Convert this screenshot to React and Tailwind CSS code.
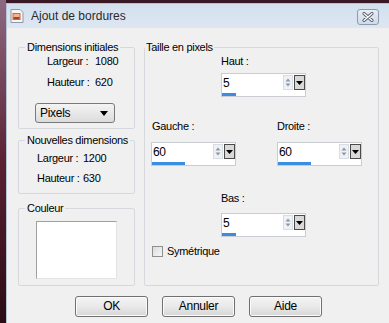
import React from "react";

function Spin({ value, bar }) {
  return (
    <div className="relative w-[85px] h-[24px] border border-[#c9cdd2] bg-white flex">
      <div className="flex-1 flex flex-col">
        <div className="h-[18px] pl-[1px] flex items-center text-[12px] leading-none text-black">{value}</div>
        <div className="flex-1 flex items-end">
          <div className="h-[3px] bg-[#3b8de0]" style={{ width: bar }} />
        </div>
      </div>
      <div className="w-[10px] mt-[1px] h-[15px] flex flex-col items-center justify-center gap-[1px] border border-[#d8dde3] bg-[#eef1f5]">
        <svg width="6" height="4" viewBox="0 0 6 4"><path d="M3 0.5 L5.5 3.5 L0.5 3.5 Z" fill="#8c98a8" /></svg>
        <svg width="6" height="4" viewBox="0 0 6 4"><path d="M0.5 0.5 L5.5 0.5 L3 3.5 Z" fill="#8c98a8" /></svg>
      </div>
      <div className="w-[11px] h-[15px] mt-[1px] ml-[1px] mr-[0px] border border-[#4a4a4a] bg-[#d9d9d9] flex items-center justify-center">
        <svg width="7" height="4" viewBox="0 0 7 4"><path d="M0 0 L7 0 L3.5 4 Z" fill="#000" /></svg>
      </div>
    </div>
  );
}

function Btn({ children }) {
  return (
    <div className="w-[73px] h-[21px] border border-[#707070] rounded-[3px] bg-gradient-to-b from-[#f4f4f4] via-[#e9e9e9] to-[#d6d6d6] flex items-center justify-center text-[12px] text-black shadow-[inset_0_0_0_1px_#fbfbfb]">
      {children}
    </div>
  );
}

export default function App() {
  return (
    <div
      className="w-[389px] h-[323px] overflow-hidden flex bg-[#3a1826] text-black tracking-[-0.3px]"
      style={{ fontFamily: '"Liberation Sans", Arial, sans-serif' }}
    >
      <div className="w-[6px] h-full bg-gradient-to-b from-[#8c6a82] via-[#5a2034] to-[#2a0c14]" />
      <div className="flex-1 flex flex-col mt-[3px] border-l border-t border-[#b6c3d2]">
        <div className="h-[24px] bg-gradient-to-b from-[#d3e0ee] to-[#dde7f2] flex items-center">
          <div className="ml-[2px] w-[16px] h-[16px] flex items-center justify-center">
            <svg width="16" height="16" viewBox="0 0 16 16">
              <path d="M2 1.5 H11 L14 4.5 V14.5 H2 Z" fill="#f4f6f8" stroke="#8d99a6" />
              <rect x="3.5" y="5" width="8" height="7" fill="#d9623a" />
              <rect x="4.5" y="6" width="6" height="3" fill="#f2b48a" />
              <rect x="5" y="9" width="5" height="2" fill="#a8402a" />
            </svg>
          </div>
          <div className="ml-[6px] text-[12px] tracking-normal text-[#2a2a2a]">Ajout de bordures</div>
          <div className="ml-auto mr-[10px] mt-[1px] w-[22px] h-[16px] rounded-[3px] border border-[#8c9bb0] bg-gradient-to-b from-[#e6edf5] to-[#cfdbe8] flex items-center justify-center">
            <svg width="12" height="10" viewBox="0 0 12 10">
              <path d="M2 1.5 L10 8.5 M10 1.5 L2 8.5" stroke="#4a5666" strokeWidth="3" strokeLinecap="round" />
              <path d="M2 1.5 L10 8.5 M10 1.5 L2 8.5" stroke="#ffffff" strokeWidth="1.4" strokeLinecap="round" />
            </svg>
          </div>
        </div>
        <div className="flex-1 bg-[#f0f0f0] flex flex-col text-[11px] leading-[13px]">
          <div className="flex pt-[13px] pl-[11px]">
            <div className="w-[117px] flex flex-col">
              <fieldset className="h-[88px] border border-[#d5d9dd] rounded-[2px]">
                <legend className="ml-[6px] px-[2px]">Dimensions initiales</legend>
                <div className="flex mt-[1px] ml-[28px]"><span className="w-[48px]">Largeur :</span><span>1080</span></div>
                <div className="flex mt-[8px] ml-[28px]"><span className="w-[48px]">Hauteur :</span><span>620</span></div>
                <div className="mt-[14px] ml-[16px] w-[80px] h-[20px] border border-[#7a7a7a] rounded-[3px] bg-gradient-to-b from-[#f4f4f4] to-[#dcdcdc] flex items-center pl-[4px] text-[12px]">
                  <span>Pixels</span>
                  <svg className="ml-auto mr-[6px]" width="8" height="5" viewBox="0 0 8 5"><path d="M0 0 L8 0 L4 5 Z" fill="#000" /></svg>
                </div>
              </fieldset>
              <fieldset className="mt-[5px] h-[60px] border border-[#d5d9dd] rounded-[2px]">
                <legend className="ml-[6px] px-[2px]">Nouvelles dimensions</legend>
                <div className="flex mt-[5px] ml-[18px]"><span className="w-[46px]">Largeur :</span><span>1200</span></div>
                <div className="flex mt-[7px] ml-[18px]"><span className="w-[46px]">Hauteur :</span><span>630</span></div>
              </fieldset>
              <fieldset className="mt-[8px] h-[84px] border border-[#d5d9dd] rounded-[2px]">
                <legend className="ml-[6px] px-[2px]">Couleur</legend>
                <div className="mt-[6px] ml-[17px] w-[81px] h-[58px] bg-white border border-t-[#a0a0a0] border-l-[#a0a0a0] border-r-[#e3e3e3] border-b-[#e3e3e3]" />
              </fieldset>
            </div>
            <fieldset className="ml-[9px] w-[235px] h-[245px] border border-[#d5d9dd] rounded-[2px]">
              <legend className="px-[1px]">Taille en pixels</legend>
              <div className="flex flex-col">
                <div className="mt-[1px] ml-[76px]">Haut :</div>
                <div className="mt-[5px] ml-[76px]"><Spin value="5" bar={14} /></div>
                <div className="mt-[23px] flex"><span className="ml-[7px] w-[125px]">Gauche :</span><span>Droite :</span></div>
                <div className="mt-[9px] flex">
                  <div className="ml-[6px]"><Spin value="60" bar={33} /></div>
                  <div className="ml-[41px]"><Spin value="60" bar={33} /></div>
                </div>
                <div className="mt-[26px] ml-[76px]">Bas :</div>
                <div className="mt-[8px] ml-[76px]"><Spin value="5" bar={14} /></div>
                <div className="mt-[8px] ml-[7px] flex items-center">
                  <div className="w-[11px] h-[11px] border border-[#8f8f8f] bg-gradient-to-br from-[#dcdcdc] to-[#f6f6f6]" />
                  <span className="ml-[4px]">Symétrique</span>
                </div>
              </div>
            </fieldset>
          </div>
          <div className="flex mt-[10px] pl-[68px] gap-[14px]">
            <Btn>OK</Btn>
            <Btn>Annuler</Btn>
            <Btn>Aide</Btn>
          </div>
        </div>
      </div>
    </div>
  );
}
